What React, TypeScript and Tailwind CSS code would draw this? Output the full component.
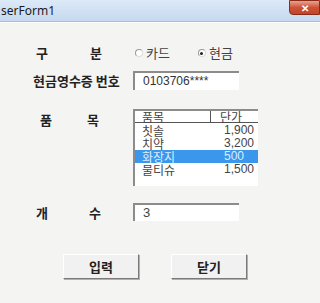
import React from 'react'

const font = { fontFamily: '"Noto Sans CJK KR", "Noto Sans", sans-serif' }

const items = [
  { name: '칫솔', price: '1,900' },
  { name: '치약', price: '3,200' },
  { name: '화장지', price: '500', selected: true },
  { name: '물티슈', price: '1,500' },
]

const Radio = ({ checked, label }: { checked?: boolean; label: string }) => (
  <div className="flex items-center gap-[3px]">
    <div className="w-[8px] h-[8px] rounded-full border border-[#9a9a9a] border-r-[#dcdcdc] border-b-[#dcdcdc] bg-white flex items-center justify-center">
      {checked && <div className="w-[3px] h-[3px] rounded-full bg-[#222]" />}
    </div>
    <span className="text-[13px] text-[#444]">{label}</span>
  </div>
)

const Button = ({ text }: { text: string }) => (
  <div className="w-[76px] h-[25px] bg-[#f1f1f1] border border-t-white border-l-white border-r-[#7a7a7a] border-b-[#7a7a7a] shadow-[1px_1px_0_#b0b0b0] flex items-center justify-center text-[13px] font-bold text-[#222]">
    {text}
  </div>
)

const App = () => {
  return (
    <div className="w-[320px] h-[303px] bg-[#f4f4f2] overflow-hidden flex flex-col" style={font}>
      {/* title bar */}
      <div className="h-[22px] flex items-start justify-between bg-gradient-to-b from-[#dce9f7] to-[#c6d9ef] border-b border-[#a9bfd8]">
        <span className="text-[12px] text-[#1a1a1a] leading-[22px] pl-[1px]" style={{ fontFamily: '"Noto Sans", sans-serif' }}>serForm1</span>
        <div className="w-[31px] h-[15px] rounded-bl-[4px] bg-gradient-to-b from-[#e4a392] via-[#cf5237] to-[#c0452c] border border-[#8a2a18] flex items-center justify-center text-white text-[10px] font-bold leading-none">
          ✕
        </div>
      </div>
      <div className="h-[1px] bg-white" />

      <div className="flex flex-col pl-[33px] pt-[21px]">
        {/* 구분 */}
        <div className="flex items-center h-[18px]">
          <div className="w-[100px] flex justify-between pl-[3px] pr-[31px] text-[13px] font-bold text-[#222]">
            <span>구</span>
            <span>분</span>
          </div>
          <div className="flex gap-[28px] pl-[2px]">
            <Radio label="카드" />
            <Radio label="현금" checked />
          </div>
        </div>

        {/* 현금영수증 번호 */}
        <div className="flex items-center mt-[9px]">
          <div className="w-[100px] text-[13px] font-bold text-[#222] whitespace-nowrap">현금영수증 번호</div>
          <div className="w-[106px] h-[19px] bg-white border-t-2 border-l-2 border-[#8c8c8c] pl-[8px] text-[12px] text-[#333] leading-[17px]" style={{ fontFamily: '"Liberation Sans", sans-serif' }}>
            0103706****
          </div>
        </div>

        {/* 품목 */}
        <div className="flex items-start mt-[18px]">
          <div className="w-[100px] flex justify-between pl-[7px] pr-[34px] text-[13px] font-bold text-[#222] pt-[1px]">
            <span>품</span>
            <span>목</span>
          </div>
          <div className="w-[125px] h-[77px] bg-white border-t-2 border-l-2 border-[#8c8c8c] flex flex-col text-[12px] leading-[13px] text-[#444]">
            <div className="flex h-[12px] border-b border-[#555]">
              <div className="w-[76px] pl-[7px] border-r border-[#555] leading-[11px]">품목</div>
              <div className="pl-[9px] leading-[11px]">단가</div>
            </div>
            <div className="pt-[1px] flex flex-col">
              {items.map((it) => (
                <div
                  key={it.name}
                  className={`flex h-[13px] ${it.selected ? 'bg-[#3a97ec] text-[#dbeeff]' : ''}`}
                >
                  <div className="w-[89px] pl-[7px]">{it.name}</div>
                  <div style={{ fontFamily: '"Liberation Sans", sans-serif' }}>{it.price}</div>
                </div>
              ))}
            </div>
          </div>
        </div>

        {/* 개수 */}
        <div className="flex items-center mt-[17px]">
          <div className="w-[100px] flex justify-between pl-[3px] pr-[32px] text-[13px] font-bold text-[#222]">
            <span>개</span>
            <span>수</span>
          </div>
          <div className="w-[106px] h-[18px] bg-white border-t-2 border-l-2 border-[#8c8c8c] pl-[8px] text-[13px] text-[#444] leading-[16px]" style={{ fontFamily: '"Liberation Sans", sans-serif' }}>
            3
          </div>
        </div>

        {/* buttons */}
        <div className="flex gap-[32px] pl-[30px] mt-[32px]">
          <Button text="입력" />
          <Button text="닫기" />
        </div>
      </div>
    </div>
  )
}

export default App
